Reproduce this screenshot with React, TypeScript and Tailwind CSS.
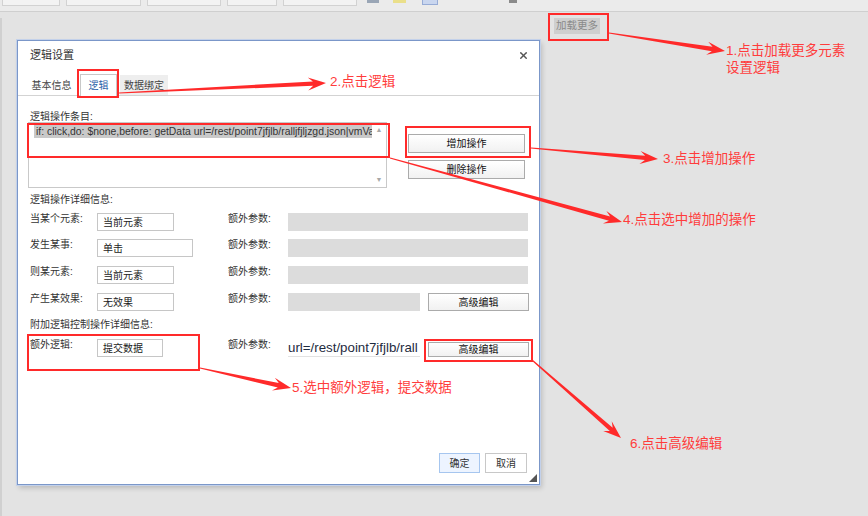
import { X } from 'lucide-react';

type Pt = [number, number];

// tapered callout arrow: thin tail at s, barbed head at t
function arrowPoints(s: Pt, t: Pt) {
  const dx = t[0] - s[0];
  const dy = t[1] - s[1];
  const len = Math.hypot(dx, dy);
  const ux = dx / len;
  const uy = dy / len;
  const nx = -uy;
  const ny = ux;
  const at = (d: number, w: number) =>
    `${(t[0] - ux * d + nx * w).toFixed(1)},${(t[1] - uy * d + ny * w).toFixed(1)}`;
  return [
    `${(s[0] + nx * 0.6).toFixed(1)},${(s[1] + ny * 0.6).toFixed(1)}`,
    at(13, 2.2),
    at(18, 6.5),
    `${t[0]},${t[1]}`,
    at(18, -6.5),
    at(13, -2.2),
    `${(s[0] - nx * 0.6).toFixed(1)},${(s[1] - ny * 0.6).toFixed(1)}`,
  ].join(' ');
}

const arrows: [Pt, Pt][] = [
  [[609, 33], [725, 51]],
  [[119, 93], [326, 83]],
  [[531, 148], [658, 159]],
  [[390, 158], [622, 222]],
  [[200, 368], [291, 388]],
  [[532, 360], [621, 438]],
];

const Input = ({ w, children }: { w: string; children: string }) => (
  <div className={`${w} h-[18px] border border-[#c6c6c6] bg-white pl-[5px] pt-[3px] text-[10px] leading-[12px] text-[#222]`}>
    {children}
  </div>
);

const Label = ({ children, w = 'w-[67px]' }: { children: string; w?: string }) => (
  <div className={`${w} shrink-0 text-[10px] leading-[12px] text-[#333]`}>{children}</div>
);

const Btn = ({ children, cls }: { children: string; cls: string }) => (
  <button className={`${cls} flex items-center justify-center border border-[#ababab] bg-gradient-to-b from-white to-[#f1f1f1] text-[10px] text-[#111]`}>
    {children}
  </button>
);

const DetailRow = ({ label, value, w, short }: { label: string; value: string; w: string; short?: boolean }) => (
  <div className="flex h-[18px] items-start">
    <div className="flex w-[198px] items-start">
      <Label>{label}</Label>
      <Input w={w}>{value}</Input>
    </div>
    <Label w="w-[60px]">额外参数:</Label>
    {short ? (
      <>
        <div className="h-[18px] w-[132px] bg-[#dcdcdc]" />
        <Btn cls="ml-[8px] h-[18px] w-[101px]">高级编辑</Btn>
      </>
    ) : (
      <div className="h-[18px] w-[240px] bg-[#dcdcdc]" />
    )}
  </div>
);

export default function App() {
  return (
    <div className="relative h-[516px] w-[868px] overflow-hidden bg-[#e3e3e3] font-['Liberation_Sans','Noto_Sans_CJK_SC',sans-serif]">
      {/* faded toolbar strip behind */}
      <div className="flex h-[12px] items-start border-b border-[#cfcfcf] bg-[#ebebeb] pl-[2px]">
        <div className="h-[6px] w-[58px] border border-t-0 border-[#d2d2d2] bg-[#f3f3f3]" />
        <div className="ml-[6px] h-[6px] w-[75px] border border-t-0 border-[#d2d2d2] bg-[#f3f3f3]" />
        <div className="ml-[6px] h-[6px] w-[74px] border border-t-0 border-[#d2d2d2] bg-[#f3f3f3]" />
        <div className="ml-[6px] h-[6px] w-[50px] border border-t-0 border-[#d2d2d2] bg-[#f3f3f3]" />
        <div className="ml-[6px] h-[6px] w-[74px] border border-t-0 border-[#d2d2d2] bg-[#f3f3f3]" />
        <div className="ml-[10px] h-[3px] w-[12px] bg-[#9aa6b6]" />
        <div className="ml-[14px] h-[3px] w-[13px] bg-[#eadf8a]" />
        <div className="ml-[16px] h-[5px] w-[16px] border border-t-0 border-[#97acd6] bg-[#c9d6ef]" />
        <div className="ml-[71px] h-[3px] w-[8px] bg-[#8a8a8a]" />
      </div>

      <div className="h-[504px] border-l-2 border-[#d0d0d0]">
        <div className="ml-[552px] mt-[6px] flex h-[16px] w-[46px] items-center justify-center bg-[#cfcfcf] text-[10.5px] text-[#8a8a8a]">
          加载更多
        </div>

        {/* dialog */}
        <div className="relative ml-[15px] mt-[6px] flex h-[445px] w-[523px] flex-col border border-[#7b97c9] bg-white shadow-[0_0_0_1px_#c3d1ea,2px_3px_5px_rgba(0,0,0,0.18)]">
          <div className="flex h-[29px] items-center justify-between pl-[12px] pr-[10px]">
            <span className="text-[11px] text-[#333]">逻辑设置</span>
            <X size={11} strokeWidth={3} className="text-[#555]" />
          </div>

          <div className="flex h-[26px] items-end border-b border-[#d3d3d3] pl-[8px]">
            <div className="flex h-[20px] w-[51px] items-center justify-center text-[10px] text-[#444]">基本信息</div>
            <div className="-mb-px ml-[3px] flex h-[22px] w-[37px] items-center justify-center border border-b-0 border-[#c8c8c8] bg-white text-[10px] text-[#2a5ea8]">
              逻辑
            </div>
            <div className="ml-[3px] flex h-[20px] w-[48px] items-center justify-center bg-[#eeeeee] text-[10px] text-[#444]">数据绑定</div>
          </div>

          <div className="flex flex-1 flex-col pl-[12px]">
            <div className="mt-[16px] h-[10px] text-[10px] leading-[10px] text-[#333]">逻辑操作条目:</div>
            <div className="flex">
              <div className="-ml-[2px] flex h-[66px] w-[359px] border border-[#c9c9c9]">
                <div className="flex-1 overflow-hidden pl-[5px] pt-[2px]">
                  <div className="h-[13px] overflow-hidden whitespace-nowrap bg-[#c9c9c9] pl-[2px] text-[10.4px] leading-[13px] text-[#333]">
                    if: click,do: $none,before: getData url=/rest/point7jfjlb/ralljfjljzgd.json|vmVar:
                  </div>
                </div>
                <div className="flex w-[14px] flex-col items-center justify-between py-[3px] text-[7px] leading-[8px] text-[#a8a8a8]">
                  <span>▲</span>
                  <span>▼</span>
                </div>
              </div>
              <div className="ml-[21px] flex w-[117px] flex-col">
                <Btn cls="mt-[12px] h-[19px] w-[117px]">增加操作</Btn>
                <Btn cls="mt-[7px] h-[19px] w-[117px]">删除操作</Btn>
              </div>
            </div>

            <div className="mt-[7px] h-[10px] text-[10px] leading-[10px] text-[#333]">逻辑操作详细信息:</div>
            <div className="mt-[8px]">
              <DetailRow label="当某个元素:" value="当前元素" w="w-[77px]" />
            </div>
            <div className="mt-[8px]">
              <DetailRow label="发生某事:" value="单击" w="w-[96px]" />
            </div>
            <div className="mt-[9px]">
              <DetailRow label="则某元素:" value="当前元素" w="w-[77px]" />
            </div>
            <div className="mt-[9px]">
              <DetailRow label="产生某效果:" value="无效果" w="w-[77px]" short />
            </div>

            <div className="mt-[9px] h-[10px] text-[10px] leading-[10px] text-[#333]">附加逻辑控制操作详细信息:</div>
            <div className="mt-[9px] flex h-[18px] items-start">
              <div className="flex w-[198px] items-start">
                <Label>额外逻辑:</Label>
                <Input w="w-[66px]">提交数据</Input>
              </div>
              <Label w="w-[60px]">额外参数:</Label>
              <div className="h-[18px] w-[132px] overflow-hidden whitespace-nowrap border-b border-[#e2e2e2] text-[13.3px] leading-[17px] text-[#1e2b40]">
                url=/rest/point7jfjlb/rall
              </div>
              <Btn cls="ml-[8px] mt-[3px] h-[15px] w-[101px]">高级编辑</Btn>
            </div>
          </div>

          <div className="flex justify-end gap-[5px] pb-[11px] pr-[12px]">
            <button className="h-[20px] w-[41px] border border-[#a6c6ef] bg-[#edf4ff] text-[10px] text-[#333]">确定</button>
            <button className="h-[20px] w-[42px] border border-[#c8c8c8] bg-white text-[10px] text-[#333]">取消</button>
          </div>

          <svg className="absolute bottom-[2px] right-[2px]" width="8" height="8" viewBox="0 0 8 8">
            <polygon points="8,0 8,8 0,8" fill="#555" />
          </svg>
        </div>
      </div>

      {/* annotation overlay */}
      <div className="absolute left-[548px] top-[13px] h-[28px] w-[61px] border-2 border-[#ff2a2a]" />
      <div className="absolute left-[77px] top-[69px] h-[29px] w-[42px] border-2 border-[#ff2a2a]" />
      <div className="absolute left-[27px] top-[123px] h-[35px] w-[363px] border-2 border-[#ff2a2a]" />
      <div className="absolute left-[405px] top-[126px] h-[32px] w-[126px] border-2 border-[#ff2a2a]" />
      <div className="absolute left-[27px] top-[334px] h-[37px] w-[173px] border-2 border-[#ff2a2a]" />
      <div className="absolute left-[424px] top-[339px] h-[23px] w-[109px] border-2 border-[#ff2a2a]" />

      <svg className="pointer-events-none absolute left-0 top-0" width="868" height="516">
        {arrows.map(([s, t], i) => (
          <polygon key={i} points={arrowPoints(s, t)} fill="#ff2a2a" />
        ))}
      </svg>

      <div className="absolute left-[726px] top-[42px] text-[13.5px] leading-[17px] text-[#ff3c3c]">
        1.点击加载更多元素
        <br />
        设置逻辑
      </div>
      <div className="absolute left-[330px] top-[73px] text-[13.5px] leading-[18px] text-[#ff3c3c]">2.点击逻辑</div>
      <div className="absolute left-[663px] top-[150px] text-[13.5px] leading-[18px] text-[#ff3c3c]">3.点击增加操作</div>
      <div className="absolute left-[623px] top-[211px] text-[13.5px] leading-[18px] text-[#ff3c3c]">4.点击选中增加的操作</div>
      <div className="absolute left-[292px] top-[379px] text-[13.5px] leading-[18px] text-[#ff3c3c]">5.选中额外逻辑，提交数据</div>
      <div className="absolute left-[630px] top-[435px] text-[13.5px] leading-[18px] text-[#ff3c3c]">6.点击高级编辑</div>
    </div>
  );
}
